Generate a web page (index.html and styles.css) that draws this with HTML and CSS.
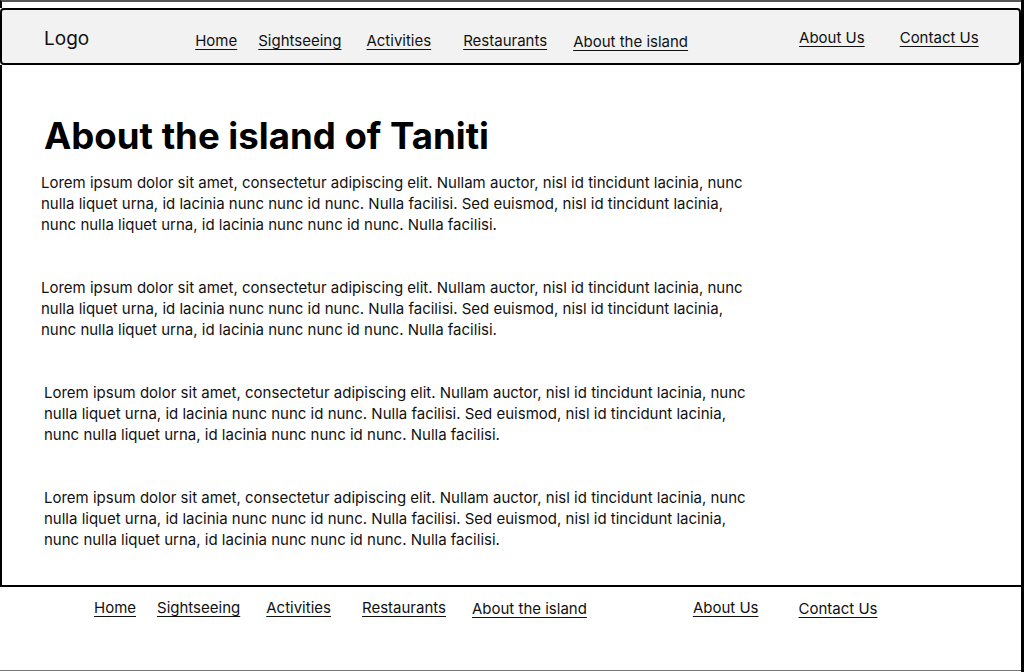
FILE: index.html
```html
<!DOCTYPE html>
<html lang="en">
<head>
<meta charset="utf-8">
<title>About the island of Taniti</title>
<link rel="stylesheet" href="styles.css">
</head>
<body>
<div class="page">
  <div class="top-strip"></div>
  <header class="site-header">
    <div class="logo">Logo</div>
    <nav class="nav-main">
      <a class="link l-home" href="#">Home</a>
      <a class="link l-sight" href="#">Sightseeing</a>
      <a class="link l-act" href="#">Activities</a>
      <a class="link l-rest" href="#">Restaurants</a>
      <a class="link l-island" href="#">About the island</a>
    </nav>
    <nav class="nav-secondary">
      <a class="link l-about" href="#">About Us</a>
      <a class="link l-contact" href="#">Contact Us</a>
    </nav>
  </header>
  <main class="content">
    <h1 class="title">About the island of Taniti</h1>
    <p class="para">Lorem ipsum dolor sit amet, consectetur adipiscing elit. Nullam auctor, nisl id tincidunt lacinia, nunc<br>nulla liquet urna, id lacinia nunc nunc id nunc. Nulla facilisi. Sed euismod, nisl id tincidunt lacinia,<br>nunc nulla liquet urna, id lacinia nunc nunc id nunc. Nulla facilisi.</p>
    <p class="para">Lorem ipsum dolor sit amet, consectetur adipiscing elit. Nullam auctor, nisl id tincidunt lacinia, nunc<br>nulla liquet urna, id lacinia nunc nunc id nunc. Nulla facilisi. Sed euismod, nisl id tincidunt lacinia,<br>nunc nulla liquet urna, id lacinia nunc nunc id nunc. Nulla facilisi.</p>
    <p class="para para-shift">Lorem ipsum dolor sit amet, consectetur adipiscing elit. Nullam auctor, nisl id tincidunt lacinia, nunc<br>nulla liquet urna, id lacinia nunc nunc id nunc. Nulla facilisi. Sed euismod, nisl id tincidunt lacinia,<br>nunc nulla liquet urna, id lacinia nunc nunc id nunc. Nulla facilisi.</p>
    <p class="para para-shift">Lorem ipsum dolor sit amet, consectetur adipiscing elit. Nullam auctor, nisl id tincidunt lacinia, nunc<br>nulla liquet urna, id lacinia nunc nunc id nunc. Nulla facilisi. Sed euismod, nisl id tincidunt lacinia,<br>nunc nulla liquet urna, id lacinia nunc nunc id nunc. Nulla facilisi.</p>
  </main>
  <footer class="site-footer">
    <a class="link f-home" href="#">Home</a>
    <a class="link f-sight" href="#">Sightseeing</a>
    <a class="link f-act" href="#">Activities</a>
    <a class="link f-rest" href="#">Restaurants</a>
    <a class="link f-island" href="#">About the island</a>
    <a class="link f-about" href="#">About Us</a>
    <a class="link f-contact" href="#">Contact Us</a>
  </footer>
</div>
</body>
</html>
```

FILE: styles.css
```css
* { box-sizing: border-box; }

html, body {
  margin: 0;
  padding: 0;
  background: #fff;
}

body {
  font-family: "Inter", "Noto Sans", "Liberation Sans", sans-serif;
  color: #000;
}

.page {
  width: 1024px;
  height: 672px;
  border-right: 3px solid #000;
  overflow: hidden;
  display: flex;
  flex-direction: column;
}

.top-strip {
  height: 8px;
  flex: none;
  border-top: 2px solid #555;
  border-left: 2px solid #000;
}

.site-header {
  height: 57px;
  flex: none;
  border: 2px solid #000;
  border-radius: 4px;
  background: #f2f2f2;
  display: flex;
  align-items: flex-start;
  padding-left: 42px;
}

.logo {
  font-size: 19px;
  line-height: 20px;
  margin-top: 18.5px;
  color: #111;
}

.link {
  font-size: 15px;
  line-height: 20px;
  color: #111;
  text-decoration: underline;
  text-decoration-thickness: 1px;
  text-underline-offset: 3px;
  white-space: nowrap;
}

.nav-main {
  display: flex;
  align-items: flex-start;
  margin-left: 106px;
  margin-top: 21px;
}

.l-sight { margin-left: 21px; }
.l-act { margin-left: 25px; }
.l-rest { margin-left: 32px; }
.l-island { margin-left: 26px; margin-top: 1px; }

.nav-secondary {
  display: flex;
  align-items: flex-start;
  margin-left: 111px;
  margin-top: 18px;
}

.l-contact { margin-left: 35px; }

.content {
  height: 522px;
  flex: none;
  border-left: 2px solid #000;
  border-bottom: 2px solid #000;
  padding: 49px 0 0 39px;
}

.title {
  font-size: 36.6px;
  line-height: 44px;
  font-weight: 700;
  margin: 0 0 14px 3px;
  letter-spacing: 0;
}

.para {
  font-size: 15px;
  line-height: 21px;
  margin: 0 0 42px 0;
  color: #111;
}

.para-shift {
  margin-left: 3px;
}

.site-footer {
  height: 84px;
  flex: none;
  border-bottom: 1px solid #777;
  display: flex;
  align-items: flex-start;
  padding: 11px 0 0 94px;
}

.f-sight { margin-left: 21px; }
.f-act { margin-left: 26px; }
.f-rest { margin-left: 31px; }
.f-island { margin-left: 26px; margin-top: 1px; }
.f-about { margin-left: 106px; }
.f-contact { margin-left: 40px; margin-top: 1px; }
```
